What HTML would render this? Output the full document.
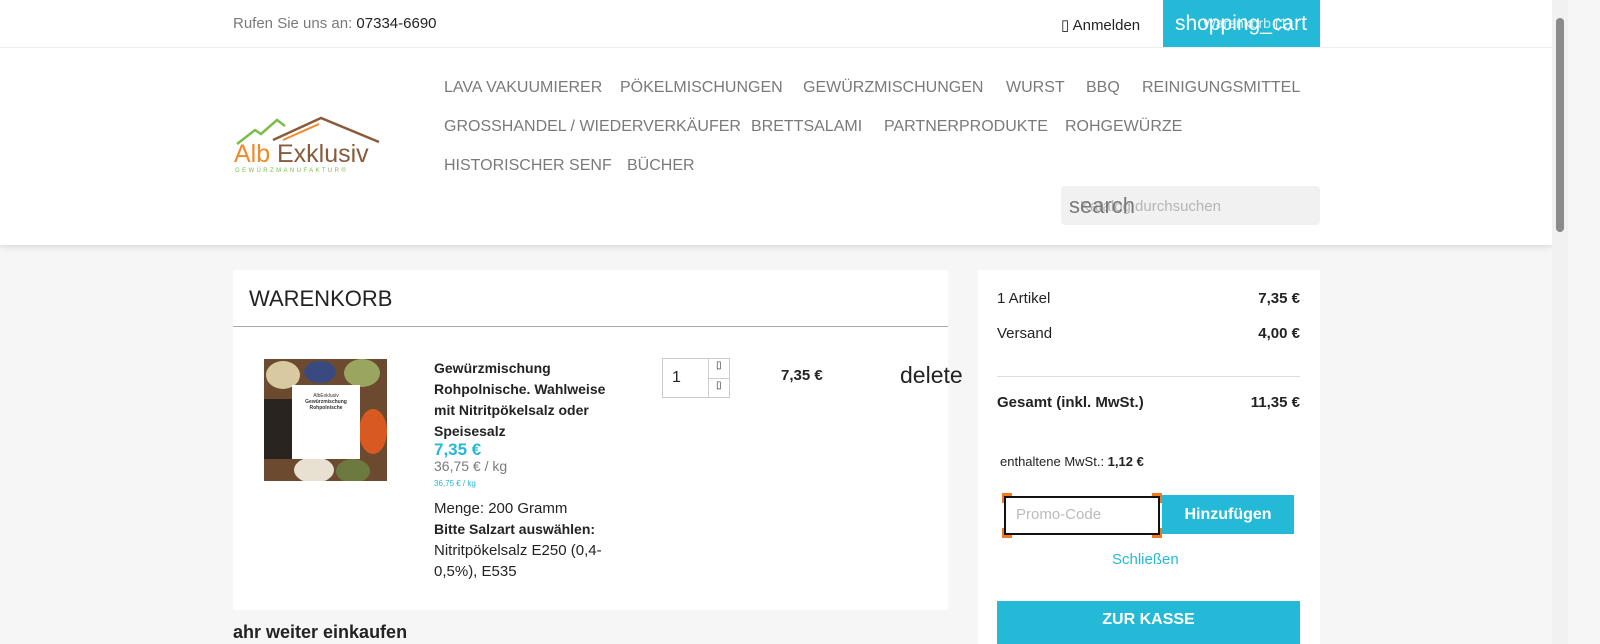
<!DOCTYPE html>
<html><head><meta charset="utf-8"><style>
*{box-sizing:border-box;margin:0;padding:0}
body{width:1600px;height:644px;overflow:hidden;background:#f6f6f6;font-family:"Liberation Sans",sans-serif;color:#232323;position:relative}
.abs{position:absolute}
.header{position:absolute;left:0;top:0;width:1552px;height:245px;background:#fff;box-shadow:0 2px 6px rgba(0,0,0,.12)}
.topline{position:absolute;left:0;top:47px;width:1552px;height:1px;background:#eee}
.nav a{position:absolute;font-size:16px;color:#7a7a7a;text-decoration:none;white-space:nowrap}
.card{position:absolute;background:#fff}
.scroll{position:absolute;left:1552px;top:0;width:16px;height:644px;background:#f1f1f1}
.thumb{position:absolute;left:1556px;top:18px;width:8px;height:214px;background:#8a8a8a;border-radius:4px}
.c{position:absolute;width:10px;height:10px;border-color:#f07a20;border-style:solid;border-width:0}
</style></head><body>
<div class="header">
<div class="abs" style="left:233px;top:15px;font-size:15px;color:#7a7a7a">Rufen Sie uns an: <span style="color:#232323">07334-6690</span></div>
<div class="abs" style="left:1061px;top:16px;font-size:15px;color:#232323">▯ Anmelden</div>
<div class="abs" style="left:1163px;top:0;width:157px;height:47px;background:#24b9d7;overflow:hidden;color:#fff;font-size:21px;line-height:47px;padding-left:12px;white-space:nowrap">shopping_cart<span style="position:absolute;left:40px;top:0;font-size:14px;opacity:.8">Warenkorb (1)</span></div>
<div class="topline"></div>
<svg class="abs" style="left:233px;top:116px" width="150" height="60" viewBox="0 0 150 60">
<polyline points="4,28 22,14 28,18 44,4 52,10" fill="none" stroke="#7cbd4a" stroke-width="2.5"/>
<polyline points="40,24 88,2 146,26" fill="none" stroke="#8a5a3c" stroke-width="2.5"/>
<polyline points="50,24 86,8" fill="none" stroke="#ef8a2a" stroke-width="2"/>
<text x="1" y="46" font-family="Liberation Sans" font-size="25" fill="#ef8a2a">Alb</text>
<text x="44" y="46" font-family="Liberation Sans" font-size="25" fill="#8a5a3c">Exklusiv</text>
<text x="2" y="56" font-family="Liberation Sans" font-size="6" letter-spacing="2.4" fill="#7cbd4a">GEWÜRZMANUFAKTUR®</text>
</svg>
<div class="nav">
<a style="left:444px;top:79px">LAVA VAKUUMIERER</a>
<a style="left:620px;top:79px">PÖKELMISCHUNGEN</a>
<a style="left:803px;top:79px">GEWÜRZMISCHUNGEN</a>
<a style="left:1006px;top:79px">WURST</a>
<a style="left:1086px;top:79px">BBQ</a>
<a style="left:1142px;top:79px">REINIGUNGSMITTEL</a>
<a style="left:444px;top:118px">GROSSHANDEL / WIEDERVERKÄUFER</a>
<a style="left:751px;top:118px">BRETTSALAMI</a>
<a style="left:884px;top:118px">PARTNERPRODUKTE</a>
<a style="left:1065px;top:118px">ROHGEWÜRZE</a>
<a style="left:444px;top:157px">HISTORISCHER SENF</a>
<a style="left:627px;top:157px">BÜCHER</a>
</div>
<div class="abs" style="left:1061px;top:186px;width:259px;height:39px;background:#f1f1f1;border-radius:4px">
<span class="abs" style="left:19px;top:12px;font-size:15px;color:#b5b5b5">Katalog durchsuchen</span>
<span class="abs" style="left:8px;top:7px;font-size:22px;color:#7a7a7a">search</span>
</div>
</div>
<div class="card" style="left:233px;top:270px;width:715px;height:340px">
<div class="abs" style="left:16px;top:16px;font-size:22px;color:#232323">WARENKORB</div>
<div class="abs" style="left:0;top:56px;width:715px;height:1px;background:#aaa"></div>
<div class="abs" style="left:31px;top:89px;width:123px;height:122px;background:#6b4a30;overflow:hidden">
<div class="abs" style="left:2px;top:2px;width:34px;height:28px;border-radius:50%;background:#d8c9a0"></div>
<div class="abs" style="left:40px;top:2px;width:32px;height:22px;border-radius:50%;background:#3a4a80"></div>
<div class="abs" style="left:80px;top:0;width:36px;height:28px;border-radius:50%;background:#9aa560"></div>
<div class="abs" style="left:0;top:40px;width:28px;height:60px;background:#2a2420"></div>
<div class="abs" style="left:95px;top:50px;width:28px;height:45px;border-radius:50%;background:#d85a20"></div>
<div class="abs" style="left:30px;top:98px;width:40px;height:26px;border-radius:50%;background:#e8e0d0"></div>
<div class="abs" style="left:72px;top:100px;width:34px;height:24px;border-radius:50%;background:#6c7a40"></div>
<div class="abs" style="left:28px;top:26px;width:68px;height:74px;background:#fff;font-size:5px;text-align:center;color:#333;padding-top:8px">AlbExklusiv<br><b>Gewürzmischung Rohpolnische</b></div>
</div>
<div class="abs" style="left:201px;top:88px;width:192px;font-size:14px;font-weight:bold;line-height:21px;color:#232323">Gewürzmischung Rohpolnische. Wahlweise mit Nitritpökelsalz oder Speisesalz</div>
<div class="abs" style="left:201px;top:170px;font-size:17px;font-weight:bold;color:#24b9d7">7,35 €</div>
<div class="abs" style="left:201px;top:188px;font-size:14px;color:#7a7a7a">36,75 € / kg</div>
<div class="abs" style="left:201px;top:209px;font-size:8px;color:#24b9d7">36,75 € / kg</div>
<div class="abs" style="left:201px;top:228px;font-size:15px;line-height:21px;color:#232323;width:200px">Menge: 200 Gramm<br><span style="font-size:14px;font-weight:bold">Bitte Salzart auswählen:</span><br>Nitritpökelsalz E250 (0,4-0,5%), E535</div>
<div class="abs" style="left:429px;top:88px;width:68px;height:40px;border:1px solid #ccc"></div>
<div class="abs" style="left:475px;top:88px;width:1px;height:40px;background:#ccc"></div>
<div class="abs" style="left:475px;top:108px;width:22px;height:1px;background:#ccc"></div>
<div class="abs" style="left:439px;top:99px;font-size:16px">1</div>
<div class="abs" style="left:483px;top:90px;font-size:10px">▯</div>
<div class="abs" style="left:483px;top:110px;font-size:10px">▯</div>
<div class="abs" style="left:548px;top:97px;font-size:15px;font-weight:bold">7,35 €</div>
<div class="abs" style="left:667px;top:92px;font-size:23px;color:#232323;white-space:nowrap">delete</div>
</div>
<div class="card" style="left:978px;top:270px;width:342px;height:374px">
<div class="abs" style="left:19px;top:20px;font-size:15px">1 Artikel</div>
<div class="abs" style="right:20px;top:20px;font-size:15px;font-weight:bold">7,35 €</div>
<div class="abs" style="left:19px;top:55px;font-size:15px">Versand</div>
<div class="abs" style="right:20px;top:55px;font-size:15px;font-weight:bold">4,00 €</div>
<div class="abs" style="left:19px;top:106px;width:303px;height:1px;background:#ddd"></div>
<div class="abs" style="left:19px;top:124px;font-size:15px;font-weight:bold">Gesamt (inkl. MwSt.)</div>
<div class="abs" style="right:20px;top:124px;font-size:15px;font-weight:bold">11,35 €</div>
<div class="abs" style="left:22px;top:184px;font-size:13px">enthaltene MwSt.: <b>1,12 €</b></div>
<div class="c" style="left:24px;top:223px;border-left-width:4px;border-top-width:4px"></div>
<div class="c" style="left:174px;top:223px;border-right-width:4px;border-top-width:4px"></div>
<div class="c" style="left:24px;top:258px;border-left-width:4px;border-bottom-width:4px"></div>
<div class="c" style="left:174px;top:258px;border-right-width:4px;border-bottom-width:4px"></div>
<div class="abs" style="left:26px;top:226px;width:156px;height:39px;border:2px solid #111;background:#fff"></div>
<div class="abs" style="left:38px;top:236px;font-size:15px;color:#bbb">Promo-Code</div>
<div class="abs" style="left:184px;top:225px;width:132px;height:39px;background:#24b9d7;color:#fff;font-size:16px;font-weight:bold;text-align:center;line-height:39px">Hinzufügen</div>
<div class="abs" style="left:134px;top:281px;font-size:15px;color:#24b9d7">Schließen</div>
<div class="abs" style="left:19px;top:331px;width:303px;height:43px;background:#24b9d7;color:#fff;font-size:16px;font-weight:bold;text-align:center;line-height:38px">ZUR KASSE</div>
</div>
<div class="abs" style="left:233px;top:622px;font-size:18px;font-weight:bold;color:#232323">ahr weiter einkaufen</div>
<div class="scroll"></div><div class="thumb"></div>
</body></html>
